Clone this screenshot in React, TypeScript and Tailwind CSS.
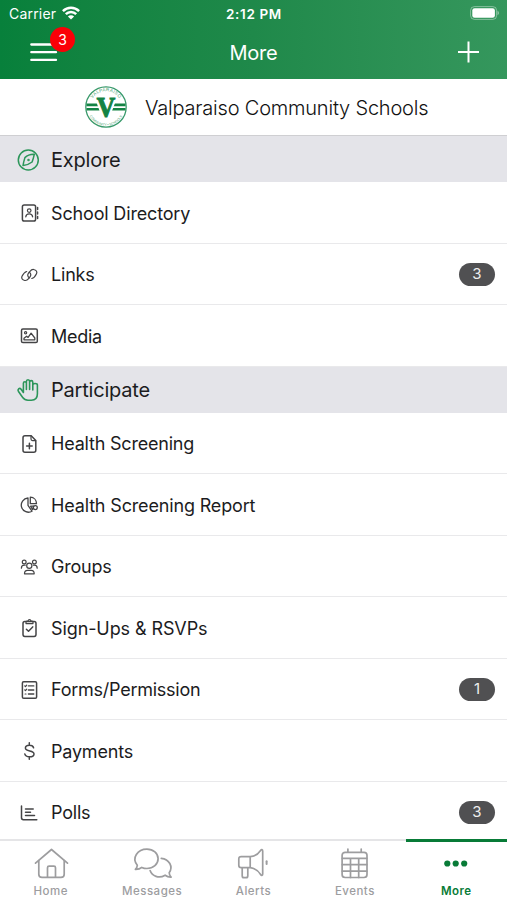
import React from "react";

type Row = { label: string; icon: React.ReactNode; count?: number; tracking: string };

const Icon = ({ children }: { children: React.ReactNode }) => (
  <svg
    className="h-6 w-6 shrink-0"
    viewBox="0 0 24 24"
    fill="none"
    stroke="currentColor"
    strokeWidth="1.5"
    strokeLinecap="round"
    strokeLinejoin="round"
  >
    {children}
  </svg>
);

const exploreRows: Row[] = [
  {
    label: "School Directory",
    tracking: "tracking-[-0.16px]",
    icon: (
      <Icon>
        <rect x="5.4" y="4" width="13.2" height="16" rx="1.8" />
        <circle cx="12.2" cy="9.6" r="1.8" strokeWidth="1.2" />
        <path d="M8.8 15.8c.2-2 1.5-3 3.4-3s3.2 1 3.4 3" strokeWidth="1.3" />
        <path d="M20.6 6.6v2M20.6 11v2M20.6 15.4v2" />
      </Icon>
    ),
  },
  {
    label: "Links",
    tracking: "tracking-[-0.2px]",
    count: 3,
    icon: (
      <Icon>
        <path
          strokeWidth="1.2"
          d="M12.3 14.8c-1.7-1-2.1-3-.8-4.7l1.5-1.8c1.3-1.6 3-2.1 4.4-1.6 2 .6 3 2.2 2.1 4-.8 1.7-2.7 4.3-4.7 4.8"
        />
        <path
          strokeWidth="1.2"
          d="M12.2 9.2c1.8 1 2.1 3 .8 4.7l-1.4 1.8c-1.3 1.6-3 2.1-4.5 1.6-2-.6-2.9-2.2-2.1-4 .8-1.7 2.7-4.3 4.7-4.8"
        />
      </Icon>
    ),
  },
  {
    label: "Media",
    tracking: "tracking-[-0.3px]",
    icon: (
      <Icon>
        <rect x="4.5" y="5" width="15.8" height="13.6" rx="1.4" />
        <circle cx="8.6" cy="8.7" r="1.1" strokeWidth="1.2" />
        <path strokeWidth="1.3" d="M7 15.8v-1.6l2.6-2 1.5 1.2 3-4.2 3.7 4.8v1.8Z" />
      </Icon>
    ),
  },
];

const participateRows: Row[] = [
  {
    label: "Health Screening",
    tracking: "tracking-[-0.2px]",
    icon: (
      <Icon>
        <path d="M8 3.7h6.2l4.6 4.7v9.8c0 1.2-.8 2-2 2H8c-1.2 0-2-.8-2-2V5.7c0-1.2.8-2 2-2Z" />
        <path strokeWidth="1.2" d="M14 3.9v3.2c0 1 .6 1.5 1.5 1.5h3.1" />
        <path d="M12.4 11.2v5.6M9.6 14h5.6" />
      </Icon>
    ),
  },
  {
    label: "Health Screening Report",
    tracking: "tracking-[-0.16px]",
    icon: (
      <Icon>
        <g strokeWidth="1.3">
          <path d="M11 5a7.100 7.100 0 1 0 4 13.200l-4-5.900Z" />
          <path d="M13.300 4.200v6.500h6.200c0-3.700-2.600-6.300-6.200-6.500Z" />
          <path d="M13.600 13.200h3.200l-1.300 3.300Z" />
          <circle cx="18.300" cy="14.600" r="2" />
        </g>
      </Icon>
    ),
  },
  {
    label: "Groups",
    tracking: "tracking-[-0.2px]",
    icon: (
      <Icon>
        <g strokeWidth="1.2">
          <circle cx="7.200" cy="7" r="1.900" />
          <circle cx="17.400" cy="7" r="1.900" />
          <circle cx="12.300" cy="10.800" r="2.600" />
          <path d="M4.400 13.200c0-2 1-3 2.800-3h1M20.200 13.200c0-2-1-3-2.800-3h-1" />
          <path d="M7.500 18.800c0-2.300 1.300-3.400 3-3.400h3.700c1.700 0 3 1.100 3 3.400Z" />
        </g>
      </Icon>
    ),
  },
  {
    label: "Sign-Ups & RSVPs",
    tracking: "tracking-[-0.1px]",
    icon: (
      <Icon>
        <rect x="6" y="5.600" width="13" height="14.800" rx="1.800" />
        <path
          strokeWidth="1.2"
          d="M9 7.600h7V6.200c0-.6-.4-1-1-1h-1c-.2-1-.7-1.500-1.500-1.500S11.200 4.200 11 5.200h-1c-.6 0-1 .4-1 1Z"
        />
        <path d="m9.400 13.200 2.100 2 4.200-4.300" />
      </Icon>
    ),
  },
  {
    label: "Forms/Permission",
    tracking: "tracking-[-0.25px]",
    count: 1,
    icon: (
      <Icon>
        <rect x="5.400" y="3.700" width="14.200" height="16.600" rx="1.300" />
        <path d="M11.400 7.900h5.400M11.400 12h5.400M11.400 16h5.400" strokeWidth="1.3" />
        <path d="m7.700 7.800.8.800 1.200-1.500M7.700 11.900l.8.800 1.200-1.500M8.100 16h.9" strokeWidth="1.2" />
      </Icon>
    ),
  },
  {
    label: "Payments",
    tracking: "tracking-[-0.2px]",
    icon: (
      <Icon>
        <path d="M12.300 3.700v2.500M12.300 17.800v2.500M16.600 8.800c-.4-1.700-2-2.600-4.200-2.600-2.300 0-4 1.100-4 2.900 0 4 8.600 1.900 8.600 5.800 0 1.900-1.900 2.900-4.500 2.900-2.500 0-4.300-1-4.700-2.900" />
      </Icon>
    ),
  },
  {
    label: "Polls",
    tracking: "tracking-[-0.2px]",
    count: 3,
    icon: (
      <Icon>
        <path d="M4.500 5v11.800c0 1.200.7 1.900 1.900 1.900h13.400" />
        <path d="M8.500 8h7.700M8.500 11.300h5M8.500 14.600h9" />
      </Icon>
    ),
  },
];

const ListRow = ({ row }: { row: Row }) => (
  <li className="flex h-[61.5px] shrink-0 items-center border-b border-[#e9e9eb] pl-[17px] pr-3 pt-[1.5px] text-[#444446]">
    {row.icon}
    <span className={`ml-[10px] flex-1 whitespace-nowrap text-[18px] text-[#1c1c1e] ${row.tracking}`}>
      {row.label}
    </span>
    {row.count && (
      <span className="flex h-[23px] w-9 items-center justify-center rounded-full bg-[#505052] text-[15px] text-[#eee]">
        {row.count}
      </span>
    )}
  </li>
);

const SectionHeader = ({ title, children }: { title: string; children: React.ReactNode }) => (
  <h2 className="flex h-[46px] shrink-0 items-center bg-[#e4e4e9] pl-4 pt-px text-[20px] text-[#1c1c1e]">
    <span className="text-[#2c965a]">
      <Icon>{children}</Icon>
    </span>
    <span className="ml-[11px] tracking-[-0.2px]">{title}</span>
  </h2>
);

const TabIcon = ({ children }: { children: React.ReactNode }) => (
  <svg
    className="h-9 w-11"
    viewBox="0 0 44 36"
    fill="none"
    stroke="currentColor"
    strokeWidth="1.7"
    strokeLinecap="round"
    strokeLinejoin="round"
  >
    {children}
  </svg>
);

const tabs = [
  {
    label: "Home",
    icon: (
      <TabIcon>
        <path d="M6.500 18.200 22.500 4.500l16 13.700" />
        <path d="M9.800 15.700v13.500c0 2.100 1.100 3.200 3.200 3.200h19c2.100 0 3.200-1.100 3.200-3.200V15.700" />
        <path d="M18.500 32.200V22.800c0-1 .6-1.600 1.600-1.600h4.800c1 0 1.600.6 1.600 1.600v9.400" />
      </TabIcon>
    ),
  },
  {
    label: "Messages",
    icon: (
      <TabIcon>
        <path d="M7.300 20.200c-6-7 .2-16 9.600-16 6.400 0 11.200 4.200 11.200 9.600s-4.800 9.700-11.200 9.700c-1.900 0-3.600-.4-5.100-1.100-1.700 1.500-3.800 2.100-6.400 2 1.200-1.200 1.800-2.500 1.900-4.200Z" />
        <path d="M31.300 13.300c7.900.7 12.200 8.400 7.900 14.500.1 1.800.7 3.100 1.900 4.300-2.300.1-4.300-.6-6-1.900-6.200 3.700-13.100.9-15-4.700" />
      </TabIcon>
    ),
  },
  {
    label: "Alerts",
    icon: (
      <TabIcon>
        <path d="M19.200 11.600h-9c-1.600 0-2.400.8-2.400 2.400v6.300c0 1.600.8 2.400 2.400 2.400h9c4.300.5 7.700 2.600 10.400 6.800.8 1.200 2.100 1.200 2.100-.5V6c0-1.700-1.300-1.700-2.100-.5-2.700 4-6.100 5.900-10.400 6.100ZM19.200 11.600v11.100M11.200 23v7.700c0 1.300.5 2 1.700 2h2.200c1.200 0 1.700-.7 1.700-2V23" />
        <path d="M35.600 16.300v2.600" strokeWidth="2" />
      </TabIcon>
    ),
  },
  {
    label: "Events",
    icon: (
      <TabIcon>
        <rect x="9.100" y="7.300" width="24.900" height="25.200" rx="3" />
        <path d="M14.900 4v3M28.200 4v3M9.300 13.300h24.500M9.300 19.700h24.500M9.300 26.200h24.500M17.500 13.500v19M25.700 13.500v19" />
      </TabIcon>
    ),
  },
  {
    label: "More",
    active: true,
    icon: (
      <TabIcon>
        <g fill="currentColor" stroke="none">
          <circle cx="13.300" cy="18.500" r="3.100" />
          <circle cx="21.700" cy="18.500" r="3.100" />
          <circle cx="30.200" cy="18.500" r="3.100" />
        </g>
      </TabIcon>
    ),
  },
];

const SchoolLogo = () => (
  <svg className="h-[42px] w-[42px]" viewBox="0 0 42 42">
    <defs>
      <path id="logo-top" d="M5.200 21a15.800 15.800 0 0 1 31.600 0" />
      <path id="logo-bottom" d="M2.300 21a18.700 18.700 0 0 0 37.400 0" />
    </defs>
    <circle cx="21" cy="21" r="20.200" fill="white" stroke="#38996a" strokeWidth="1.3" />
    <path stroke="#148344" strokeWidth="2.6" d="M1.500 18.900H40.500M1.500 23.200H40.500" />
    <path fill="white" d="M9.800 9h22.700v7.500h-2.300L24 33h-6.500l-6-16.500H9.800Z" />
    <text
      textAnchor="middle"
      transform="translate(21 31) scale(.88 1)"
      fill="#148344"
      stroke="#148344"
      strokeWidth="1.2"
      fontSize="29"
      fontFamily="Liberation Serif, serif"
      fontWeight="700"
    >
      V
    </text>
    <g fill="#4b9f72" fontFamily="Liberation Sans, sans-serif">
      <text fontSize="4.6" textAnchor="middle" letterSpacing="0.3">
        <textPath href="#logo-top" startOffset="50%">
          VALPARAISO
        </textPath>
      </text>
      <text fontSize="3.3" textAnchor="middle">
        <textPath href="#logo-bottom" startOffset="50%">
          COMMUNITY • SCHOOLS
        </textPath>
      </text>
    </g>
  </svg>
);

const Header = () => (
  <header className="h-[79px] shrink-0 bg-gradient-to-r from-[#07803b] via-[#1f894a] to-[#35975d] text-white">
    <div className="grid h-7 grid-cols-3 items-center pl-[9px] pr-2">
      <div className="-mt-px flex items-center gap-[6px] text-[14px] tracking-[0.2px]">
        Carrier
        <svg className="-mt-px h-[14px] w-[18px]" viewBox="0 0 18 14" fill="none" stroke="currentColor" strokeWidth="2.5">
          <path d="M.9 5.100c4.700-4.500 11.500-4.500 16.200 0M3.800 8.200c3-2.900 7.400-2.900 10.400 0" />
          <path d="M5.900 10.400c1.800-1.700 4.400-1.700 6.200 0L9 13.500Z" fill="currentColor" stroke="none" />
        </svg>
      </div>
      <div className="text-center text-[13.5px] font-semibold tracking-[0.65px]">2:12 PM</div>
      <svg className="-mt-[2px] h-[14px] w-[30px] justify-self-end" viewBox="0 0 30 14">
        <rect x="1.6" y=".6" width="26" height="12.800" rx="3.800" fill="none" stroke="white" strokeOpacity=".4" />
        <rect x="3.300" y="2.300" width="22.600" height="9.400" rx="2.300" fill="white" />
        <path d="M28.600 4.800c1.500.7 1.500 3.700 0 4.400Z" fill="white" fillOpacity=".6" />
      </svg>
    </div>
    <div className="grid h-[49px] grid-cols-3 items-center px-[27px]">
      <div className="relative w-fit">
        <svg className="ml-[3px] h-[22px] w-7" viewBox="0 0 28 22" stroke="white" strokeWidth="2.3" strokeLinecap="round">
          <path d="M1.300 2.500H26M1.300 10.200H26M1.300 17.900H26" />
        </svg>
        <span className="absolute -top-[15px] left-[23px] flex h-[25px] w-[25px] items-center justify-center rounded-full bg-[#fb0007] text-[14px]">
          3
        </span>
      </div>
      <h1 className="text-center text-[20px] tracking-[-0.2px]">More</h1>
      <svg className="-mt-px h-[22px] w-[22px] justify-self-end" viewBox="0 0 22 22" stroke="white" strokeWidth="2">
        <path d="M10.500 .5v21M0 11h21" />
      </svg>
    </div>
  </header>
);

const App = () => {
  return (
    <div className="flex h-[900px] w-full flex-col overflow-hidden bg-white font-['Inter',sans-serif]">
      <Header />
      <div className="flex h-[57px] shrink-0 items-center border-b border-[#cfcfd2] pl-[85px]">
        <SchoolLogo />
        <span className="ml-[18px] mt-px whitespace-nowrap text-[20px] font-light tracking-[-0.2px] text-[#111]">
          Valparaiso Community Schools
        </span>
      </div>
      <main className="flex min-h-0 flex-1 flex-col overflow-hidden">
        <SectionHeader title="Explore">
          <circle cx="12.300" cy="12" r="10" />
          <path d="M18.300 6.300c-3.600-.2-6.800.8-9.400 3.300-.8 2.700-1.500 5.200-1.900 8 3.500-.3 6.200-1.400 9.100-3.600.9-2.500 1.600-5 2.200-7.700Z" />
          <circle cx="12.500" cy="12" r=".5" />
        </SectionHeader>
        <ul>
          {exploreRows.map((row) => (
            <ListRow key={row.label} row={row} />
          ))}
        </ul>
        <SectionHeader title="Participate">
          <path
            strokeWidth="1.6"
            d="M7.400 14.500V5.300c0-2.100 3-2.100 3 0v6.200-8c0-2.300 3.200-2.300 3.200 0v8-7.200c0-2.200 3.200-2.200 3.200 0v7.700-4.900c0-2.100 4.600-2.100 4.600 0v8.700c0 4-2.400 6.400-6 6.400H12c-2.300 0-4-.9-5.300-2.700l-4.200-6c-1.500-2.200 1-4 2.600-2.300Z"
          />
        </SectionHeader>
        <ul>
          {participateRows.map((row) => (
            <ListRow key={row.label} row={row} />
          ))}
        </ul>
      </main>
      <nav className="grid h-[61px] shrink-0 grid-cols-5 border-t-2 border-[#e5e5e7] bg-white">
        {tabs.map((tab) => (
          <div
            key={tab.label}
            className={`-mt-[2px] flex flex-col items-center border-t-[3px] ${
              tab.active ? "border-[#087b37] font-semibold text-[#087b37]" : "border-transparent font-medium text-[#9d9d9f]"
            }`}
          >
            <div className="mt-[3px]">{tab.icon}</div>
            <span className="mt-[2px] text-[11.5px] leading-4 tracking-[0.5px]">{tab.label}</span>
          </div>
        ))}
      </nav>
    </div>
  );
};

export default App;
